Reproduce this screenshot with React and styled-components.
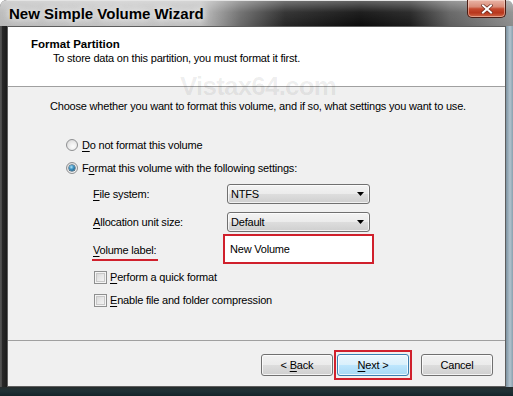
import React from 'react';
import styled, { createGlobalStyle } from 'styled-components';

const Global = createGlobalStyle`
  html, body { margin: 0; padding: 0; background: #ffffff; }
  body { width: 513px; height: 396px; overflow: hidden; font-family: "Liberation Sans", Arial, sans-serif; }
  * { box-sizing: border-box; }
`;

const Window = styled.div`
  width: 513px;
  height: 396px;
  display: flex;
  flex-direction: column;
  border-radius: 7px 7px 0 0;
  overflow: hidden;
  background:
    linear-gradient(0deg, #15252a 0, #1f3136 5px, #262b2c 9px, rgba(0,0,0,0) 9px),
    linear-gradient(90deg, #3b3b3b 0, #6a6a6a 1px, #2a2a2a 2px, #1c1c1c 7px, #1c1c1c 496px, #7c92a0 506px, #b2c3ce 510px, #8aa0ae 513px);
`;

const TitleBar = styled.div`
  height: 26px;
  flex: none;
  display: flex;
  align-items: flex-start;
  border-top: 1px solid #e4e4e4;
  background:
    linear-gradient(180deg, rgba(255,255,255,0.35) 0, rgba(255,255,255,0.08) 45%, rgba(0,0,0,0) 100%),
    linear-gradient(90deg, #b8b8b8 0, #c4c4c4 120px, #bdbdbd 200px, #6a6a6a 240px, #262626 285px, #0c0c0c 360px, #1c1c1c 410px, #5e5e5e 450px, #8c8c8c 513px);
`;

const Title = styled.h1`
  margin: 0;
  padding: 4px 0 0 9px;
  font: bold 15px/17px "Liberation Sans", Arial, sans-serif;
  color: #000;
  text-shadow: 0 0 6px rgba(255,255,255,0.9), 0 0 12px rgba(255,255,255,0.6);
`;

const CloseBtn = styled.button`
  margin: -1px 7px 0 auto;
  width: 39px;
  height: 18px;
  padding: 0;
  border: 1px solid #4b1d14;
  border-top: none;
  border-radius: 0 0 5px 5px;
  background: linear-gradient(180deg, #e9b4a6 0, #d98c78 40%, #c54a2f 52%, #b8361c 75%, #d06848 100%);
  box-shadow: inset 0 0 0 1px rgba(255,230,220,0.45);
  display: flex;
  align-items: center;
  justify-content: center;
`;

const Client = styled.div`
  flex: 1;
  margin: 0 7px 9px 7px;
  display: flex;
  flex-direction: column;
  position: relative;
  background: #f0f0f0;
  border: 1px solid #5e5e5e;
  font: 11px/15px "Liberation Sans", Arial, sans-serif;
  letter-spacing: -0.2px;
  color: #000;
`;

const Header = styled.div`
  height: 60px;
  flex: none;
  background: #fff;
  border-bottom: 1px solid #a0a0a0;
  padding: 10px 0 0 23px;
`;

const HeaderTitle = styled.div`
  font-weight: bold;
  font-size: 11.5px;
  line-height: 14px;
  letter-spacing: 0;
`;

const HeaderSub = styled.div`
  line-height: 14px;
  padding-left: 22px;
`;

const Watermark = styled.div`
  position: absolute;
  left: 172px;
  top: 46px;
  font: bold 26px/26px "Liberation Sans", Arial, sans-serif;
  letter-spacing: -0.8px;
  color: rgba(0,0,0,0.07);
  pointer-events: none;
`;

const Body = styled.div`
  flex: 1;
  padding: 12px 0 0 42px;
  display: flex;
  flex-direction: column;
`;

const Intro = styled.div`
  line-height: 15px;
`;

const Options = styled.div`
  padding-left: 16px;
  display: flex;
  flex-direction: column;
`;

const Row = styled.label`
  display: flex;
  align-items: center;
  height: 16px;
  gap: ${p => p.$gap || 4}px;
  margin-top: ${p => p.$top || 0}px;
  margin-left: ${p => p.$left || 0}px;
`;

const Radio = styled.span`
  width: 12px;
  height: 12px;
  border-radius: 50%;
  border: 1px solid #8f9092;
  background: radial-gradient(circle at 60% 65%, #fdfdfd 0, #ececec 45%, #cfcfcf 100%);
  display: flex;
  align-items: center;
  justify-content: center;
  flex: none;
  &::after {
    content: "";
    display: ${p => (p.$checked ? 'block' : 'none')};
    width: 6px;
    height: 6px;
    border-radius: 50%;
    background: radial-gradient(circle at 40% 35%, #b4e6f8 0, #3f94c4 40%, #0f4465 100%);
    box-shadow: 0 0 0 0.5px #0d3550;
  }
`;

const Check = styled.span`
  width: 13px;
  height: 13px;
  flex: none;
  border: 1px solid #8e8f8f;
  background: linear-gradient(135deg, #d0d0d0 0, #e6e6e6 45%, #f8f8f8 100%);
  box-shadow: inset 0 0 0 1px #f4f4f4, inset 0 0 0 2px #c8c8c8;
`;

const U = styled.span`
  text-decoration: underline;
  text-underline-offset: 2px;
`;

const SettingRow = styled.div`
  display: flex;
  align-items: center;
  height: ${p => p.$h || 20}px;
  margin: ${p => p.$top || 0}px 0 0 27px;
`;

const FieldLabel = styled.span`
  width: 130px;
  flex: none;
  white-space: nowrap;
`;

const Marked = styled.span`
  display: inline-block;
  margin-top: 6px;
  margin-left: -1px;
  padding: 0 2px 1px 1px;
  border-bottom: 2px solid #d0202c;
`;

const Combo = styled.div`
  margin-left: 4px;
  width: 143px;
  height: 20px;
  border: 1px solid #707070;
  border-radius: 3px;
  background: linear-gradient(180deg, #f3f3f3 0, #ebebeb 50%, #dddddd 51%, #cfcfcf 100%);
  box-shadow: inset 0 0 0 1px rgba(255,255,255,0.7);
  display: flex;
  align-items: center;
  justify-content: space-between;
  padding: 0 5px 0 3px;
`;

const RedFrame = styled.div`
  border: 2px solid #d0202c;
  padding: ${p => p.$pad || '0'};
  background: ${p => p.$bg || 'transparent'};
  display: flex;
  align-items: center;
`;

const TextBox = styled.div`
  width: 147px;
  height: 26px;
  background: #fff;
  padding: 0 5px;
  display: flex;
  align-items: center;
`;

const Footer = styled.div`
  height: 46px;
  flex: none;
  border-top: 1px solid #a0a0a0;
  display: flex;
  align-items: center;
  justify-content: flex-end;
  padding: 3px 12px 0 0;
`;

const Button = styled.button`
  width: 72px;
  height: 22px;
  padding: 0;
  margin-right: ${p => p.$mr || 0}px;
  margin-left: ${p => p.$ml || 0}px;
  font: 11px "Liberation Sans", Arial, sans-serif;
  letter-spacing: -0.2px;
  color: #000;
  border: 1px solid ${p => (p.$default ? '#3c7fb1' : '#707070')};
  border-radius: 3px;
  background: ${p =>
    p.$default
      ? 'linear-gradient(180deg, #eaf6fd 0, #d9f0fc 50%, #bee6fd 51%, #a7d9f5 100%)'
      : 'linear-gradient(180deg, #f2f2f2 0, #ebebeb 50%, #dddddd 51%, #cfcfcf 100%)'};
  box-shadow: inset 0 0 0 1px rgba(255,255,255,0.75);
`;

const CloseIcon = () => (
  <svg width="12" height="10" viewBox="0 0 12 10">
    <path d="M2 1.5 L10 8.5 M10 1.5 L2 8.5" stroke="#6a2a1e" strokeWidth="3.4" strokeLinecap="square" />
    <path d="M2 1.5 L10 8.5 M10 1.5 L2 8.5" stroke="#ffffff" strokeWidth="2" strokeLinecap="square" />
  </svg>
);

const DropArrow = () => (
  <svg width="7" height="4" viewBox="0 0 7 4">
    <path d="M0 0 H7 L3.5 4 Z" fill="#000" />
  </svg>
);

export default function App() {
  return (
    <>
      <Global />
      <Window>
        <TitleBar>
          <Title>New Simple Volume Wizard</Title>
          <CloseBtn aria-label="Close"><CloseIcon /></CloseBtn>
        </TitleBar>
        <Client>
          <Header>
            <HeaderTitle>Format Partition</HeaderTitle>
            <HeaderSub>To store data on this partition, you must format it first.</HeaderSub>
          </Header>
          <Watermark>Vistax64.com</Watermark>
          <Body>
            <Intro>Choose whether you want to format this volume, and if so, what settings you want to use.</Intro>
            <Options>
              <Row $top={23}>
                <Radio />
                <span><U>D</U>o not format this volume</span>
              </Row>
              <Row $top={7}>
                <Radio $checked />
                <span>F<U>o</U>rmat this volume with the following settings:</span>
              </Row>
              <SettingRow $top={8}>
                <FieldLabel><U>F</U>ile system:</FieldLabel>
                <Combo><span>NTFS</span><DropArrow /></Combo>
              </SettingRow>
              <SettingRow $top={8}>
                <FieldLabel><U>A</U>llocation unit size:</FieldLabel>
                <Combo><span>Default</span><DropArrow /></Combo>
              </SettingRow>
              <SettingRow $top={2} $h={30}>
                <FieldLabel><Marked><U>V</U>olume label:</Marked></FieldLabel>
                <RedFrame $bg="#fff"><TextBox>New Volume</TextBox></RedFrame>
              </SettingRow>
              <Row $top={5} $left={28} $gap={3}>
                <Check />
                <span><U>P</U>erform a quick format</span>
              </Row>
              <Row $top={7} $left={28} $gap={3}>
                <Check />
                <span><U>E</U>nable file and folder compression</span>
              </Row>
            </Options>
          </Body>
          <Footer>
            <Button $mr={1}>&lt; <U>B</U>ack</Button>
            <RedFrame $pad="2px 1px">
              <Button $default><U>N</U>ext &gt;</Button>
            </RedFrame>
            <Button $ml={9}>Cancel</Button>
          </Footer>
        </Client>
      </Window>
    </>
  );
}
